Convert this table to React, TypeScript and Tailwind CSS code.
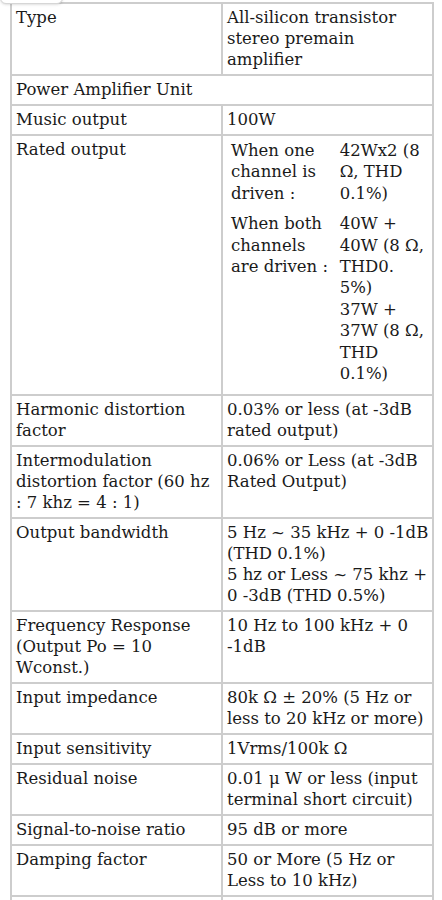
const rows: { label: string[]; value: string[]; full?: boolean }[] = [
  { label: ["Type"], value: ["All-silicon transistor", "stereo premain", "amplifier"] },
  { label: ["Power Amplifier Unit"], value: [], full: true },
  { label: ["Music output"], value: ["100W"] },
]

const rest: { label: string[]; value: string[] }[] = [
  { label: ["Harmonic distortion", "factor"], value: ["0.03% or less (at -3dB", "rated output)"] },
  {
    label: ["Intermodulation", "distortion factor (60 hz", ": 7 khz = 4 : 1)"],
    value: ["0.06% or Less (at -3dB", "Rated Output)"],
  },
  {
    label: ["Output bandwidth"],
    value: ["5 Hz ~ 35 kHz + 0 -1dB", "(THD 0.1%)", "5 hz or Less ~ 75 khz +", "0 -3dB (THD 0.5%)"],
  },
  {
    label: ["Frequency Response", "(Output Po = 10", "Wconst.)"],
    value: ["10 Hz to 100 kHz + 0", "-1dB"],
  },
  { label: ["Input impedance"], value: ["80k Ω ± 20% (5 Hz or", "less to 20 kHz or more)"] },
  { label: ["Input sensitivity"], value: ["1Vrms/100k Ω"] },
  { label: ["Residual noise"], value: ["0.01 μ W or less (input", "terminal short circuit)"] },
  { label: ["Signal-to-noise ratio"], value: ["95 dB or more"] },
  { label: ["Damping factor"], value: ["50 or More (5 Hz or", "Less to 10 kHz)"] },
]

const Lines = ({ lines }: { lines: string[] }) => (
  <>
    {lines.map((l, i) => (
      <span key={i} className="block whitespace-nowrap">
        {l}
      </span>
    ))}
  </>
)

const cell = "border-2 border-[#cdcdcd] align-top px-[4px] pt-[3px] pb-[4px]"

export default function App() {
  return (
    <div
      className="relative min-h-[900px] w-[442px] overflow-hidden bg-white text-[#1a1a1a] text-[16.5px] leading-[21px]"
      style={{ fontFamily: '"DejaVu Serif", "Liberation Serif", serif' }}
    >
      <div className="absolute left-0 top-[-6px] h-[10px] w-[63px] rounded-br-md rounded-bl-md border border-[#d6d6d6] bg-white shadow-sm" />
      <table className="ml-[10px] mt-[2px] w-[422px] table-fixed border-collapse">
        <colgroup>
          <col className="w-[211px]" />
          <col className="w-[211px]" />
        </colgroup>
        <tbody>
          {rows.map((r, i) =>
            r.full ? (
              <tr key={i}>
                <td colSpan={2} className={cell}>
                  <Lines lines={r.label} />
                </td>
              </tr>
            ) : (
              <tr key={i}>
                <td className={cell}>
                  <Lines lines={r.label} />
                </td>
                <td className={cell}>
                  <Lines lines={r.value} />
                </td>
              </tr>
            )
          )}
          <tr>
            <td className={cell}>Rated output</td>
            <td className="border-2 border-[#cdcdcd] align-top px-[4px] pt-[2px] pb-[8px]">
              <table className="border-separate border-spacing-[2px] leading-[21.4px]">
                <tbody>
                  <tr>
                    <td className="align-top pl-[2px] pr-[4px] w-[108px]">
                      <Lines lines={["When one", "channel is", "driven :"]} />
                    </td>
                    <td className="align-top px-[2px]">
                      <Lines lines={["42Wx2 (8", "Ω, THD", "0.1%)"]} />
                    </td>
                  </tr>
                  <tr>
                    <td className="align-top pl-[2px] pr-[4px] pt-[7px]">
                      <Lines lines={["When both", "channels", "are driven :"]} />
                    </td>
                    <td className="align-top px-[2px] pt-[7px]">
                      <Lines
                        lines={["40W +", "40W (8 Ω,", "THD0.", "5%)", "37W +", "37W (8 Ω,", "THD", "0.1%)"]}
                      />
                    </td>
                  </tr>
                </tbody>
              </table>
            </td>
          </tr>
          {rest.map((r, i) => (
            <tr key={i}>
              <td className={cell}>
                <Lines lines={r.label} />
              </td>
              <td className={cell}>
                <Lines lines={r.value} />
              </td>
            </tr>
          ))}
          <tr>
            <td className={`${cell} h-[30px]`}></td>
            <td className={cell}></td>
          </tr>
        </tbody>
      </table>
    </div>
  )
}
